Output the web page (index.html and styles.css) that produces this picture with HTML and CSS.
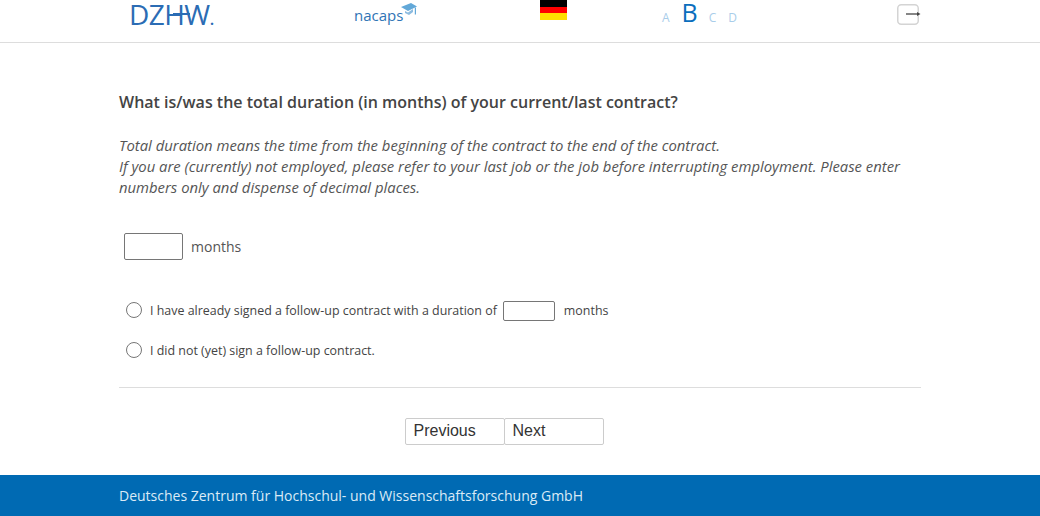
FILE: index.html
```html
<!DOCTYPE html>
<html lang="en">
<head>
<meta charset="utf-8">
<title>Survey</title>
<link rel="stylesheet" href="styles.css">
</head>
<body>
<header class="header">
  <div class="header-grid">
    <div class="logo-dzhw"><span class="logo-h">DZH</span><span class="logo-w">W</span><span class="logo-dot">.</span></div>
    <div class="logo-nacaps">nacaps<svg class="cap" viewBox="0 0 16 13" width="16" height="13"><path d="M0 4 L10 0 L16 3.5 L7 8 Z" fill="#62a8d8"/><path d="M4 8 L4 10 L8 12 L12 9 L12 6 L7 9.5 Z" fill="#8dbce0"/><path d="M13.8 4.5 H15 V11.5 H13.8 Z" fill="#62a8d8"/></svg></div>
    <div class="flag"><span class="flag-black"></span><span class="flag-red"></span><span class="flag-gold"></span></div>
    <div class="sizes"><span class="size">A</span><span class="size size-current">B</span><span class="size">C</span><span class="size">D</span></div>
    <div class="exit"><svg viewBox="0 0 22 21" width="22" height="21"><rect x="0.75" y="0.75" width="20.5" height="19.5" rx="3.5" fill="#fff" stroke="#d4d4d4" stroke-width="1.5"/><path d="M9 10 H21" stroke="#444" stroke-width="1.3"/><path d="M20 8 L23.5 10 L20 12 Z" fill="#444"/></svg></div>
  </div>
</header>
<main class="main">
  <h1 class="question">What is/was the total duration (in months) of your current/last contract?</h1>
  <p class="hint">Total duration means the time from the beginning of the contract to the end of the contract.<br>If you are (currently) not employed, please refer to your last job or the job before interrupting employment. Please enter numbers only and dispense of decimal places.</p>
  <div class="months-row"><input class="months-input" type="text" aria-label="months"><span>months</span></div>
  <div class="options">
    <label class="option"><input class="radio" type="radio" name="followup"><span>I have already signed a follow-up contract with a duration of</span><input class="inline-input" type="text" aria-label="months"><span class="inline-unit">months</span></label>
    <label class="option"><input class="radio" type="radio" name="followup"><span>I did not (yet) sign a follow-up contract.</span></label>
  </div>
  <nav class="pager"><button class="pager-btn" type="button">Previous</button><button class="pager-btn pager-next" type="button">Next</button></nav>
</main>
<footer class="footer"><div class="footer-text">Deutsches Zentrum für Hochschul- und Wissenschaftsforschung GmbH</div></footer>
</body>
</html>
```
FILE: styles.css
```css
* { box-sizing: border-box; }
html, body { margin: 0; height: 516px; overflow: hidden; }
body {
  font-family: "Open Sans", sans-serif;
  color: #444;
  background: #fff;
  display: flex;
  flex-direction: column;
}
.header { height: 43px; border-bottom: 1px solid #ddd; overflow: hidden; }
.header-grid {
  width: 802px;
  margin-left: 119px;
  padding-left: 10px;
  display: grid;
  grid-template-columns: 225px 186px 122px 235px 22px;
  height: 42px;
}
.logo-dzhw {
  font-size: 28px;
  line-height: 28px;
  color: #2b6cb4;
  font-weight: 400;
  white-space: nowrap;
}
.logo-h { position: relative; letter-spacing: -0.6px; }
.logo-h::after {
  content: "";
  position: absolute;
  left: 44px;
  width: 17px;
  top: 18px;
  height: 2px;
  background: #2b6cb4;
}
.logo-dot { font-size: 14px; font-weight: 700; }
.logo-nacaps {
  font-size: 15px;
  line-height: 20px;
  padding-top: 5px;
  color: #2f74b5;
  display: flex;
  align-items: flex-start;
}
.cap { margin-top: -2px; margin-left: -2px; }
.flag { width: 27px; height: 20px; display: flex; flex-direction: column; }
.flag span { flex: 1; }
.flag-black { background: #000; }
.flag-red { background: #f00; }
.flag-gold { background: #ffde00; }
.sizes { display: flex; align-items: baseline; height: 24px; color: #a9cdea; font-size: 12px; line-height: 24px; }
.size { margin-right: 12px; }
.size-current { font-size: 25px; color: #0a6ebd; margin-right: 11px; }
.exit { padding-top: 4px; height: 25px; }
.exit svg { display: block; overflow: visible; }
.main { flex: 1; width: 802px; margin-left: 119px; }
.question { margin: 48px 0 0; font-size: 16px; line-height: 22px; font-weight: 600; color: #444; }
.hint { margin: 22px 0 0; font-size: 14.85px; line-height: 21px; font-style: italic; color: #555; }
.months-row { margin: 35px 0 0 5px; display: flex; align-items: center; gap: 8px; font-size: 14px; height: 27px; color: #555; }
.months-input { width: 59px; height: 27px; border: 1px solid #767676; border-radius: 2px; padding: 0; background: #fff; }
.options { margin: 30px 0 0 7px; }
.option { display: flex; align-items: center; height: 40px; font-size: 12.45px; font-weight: 500; color: #444; }
.radio { appearance: none; width: 16px; height: 16px; margin: 0 8px 0 0; border: 1px solid #767676; border-radius: 50%; background: #fff; }
.inline-input { width: 52px; height: 20px; margin: 2px 9px 0 6px; border: 1px solid #767676; border-radius: 2px; padding: 0; background: #fff; }
.pager {
  margin-top: 17px;
  padding: 30px 32px 0 0;
  border-top: 1px solid #ddd;
  display: flex;
  justify-content: center;
}
.pager-btn {
  width: 100px;
  height: 27px;
  border: 1px solid #ccc;
  border-radius: 2px;
  background: #fff;
  font-family: "Liberation Sans", Arial, sans-serif;
  font-size: 16px;
  color: #333;
  text-align: left;
  padding: 0 0 2px 8px;
}
.pager-next { margin-left: -1px; }
.footer { height: 41px; background: #006ab3; color: #dbeaf6; }
.footer-text { margin-left: 119px; font-size: 14px; line-height: 41px; }
```
